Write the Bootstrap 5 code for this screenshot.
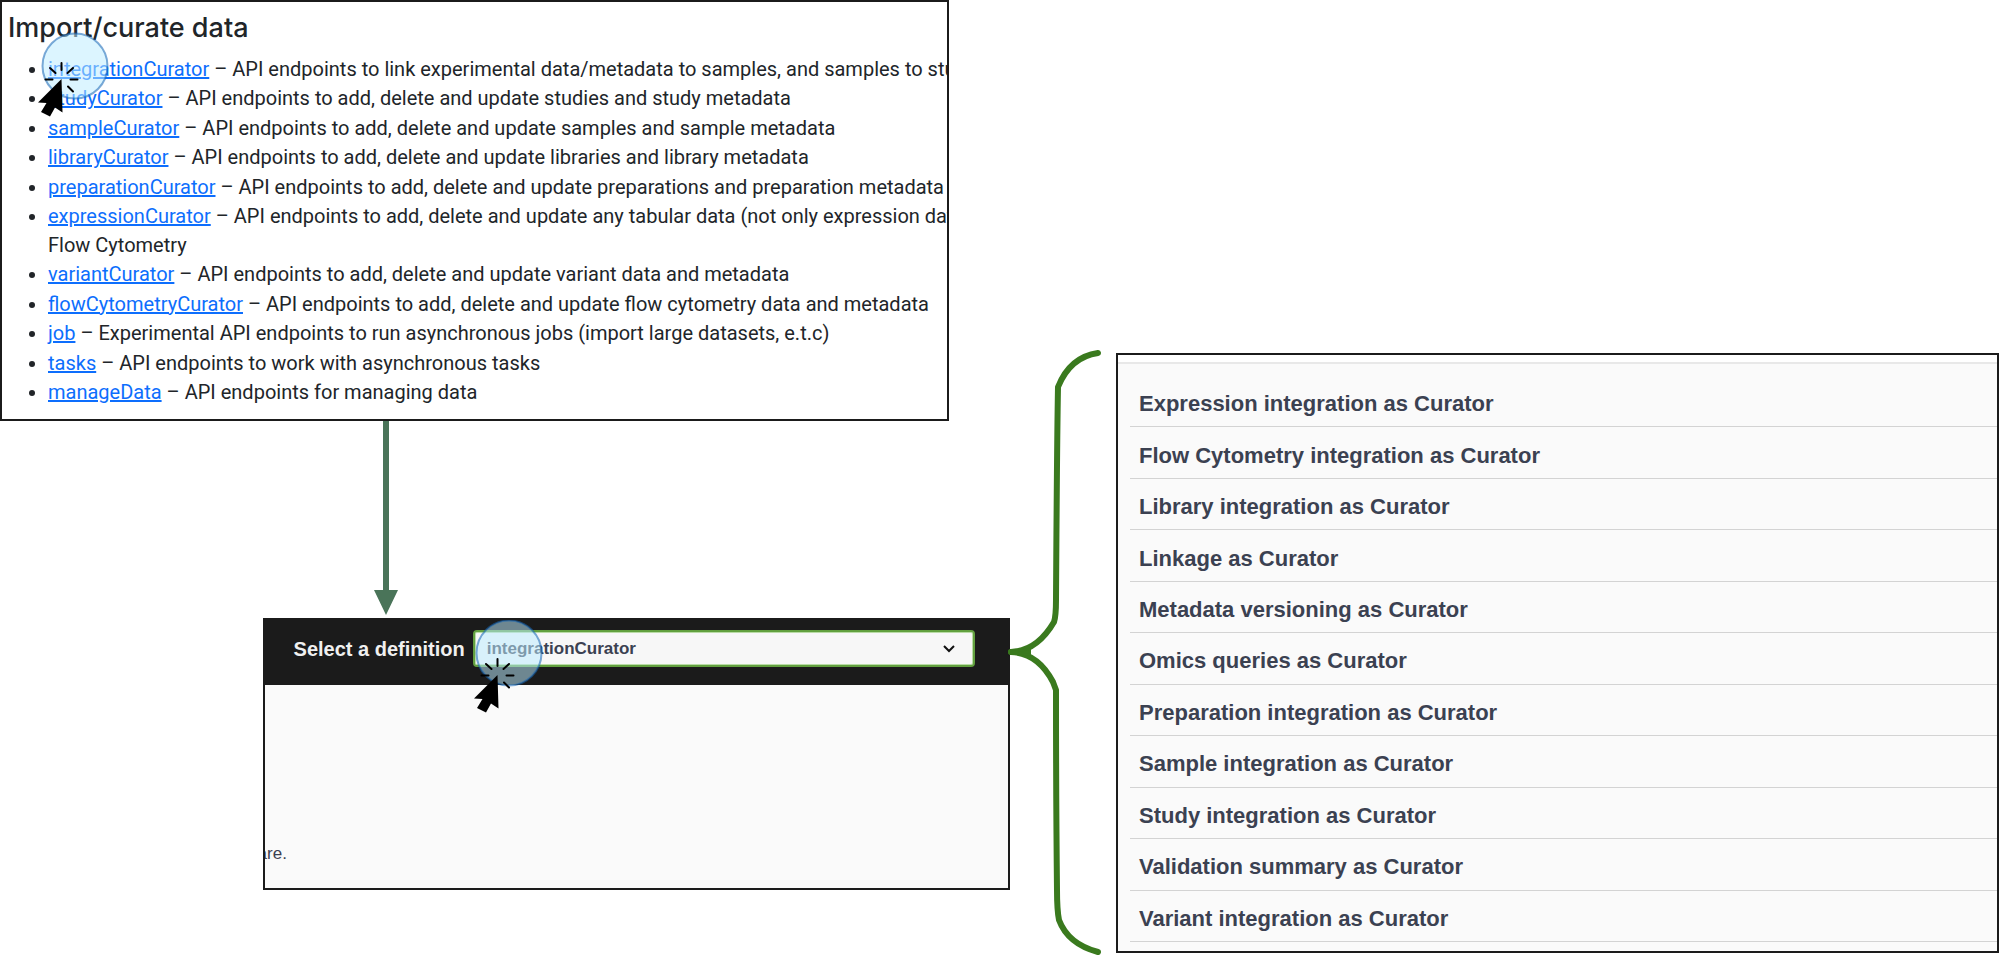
<!DOCTYPE html>
<html lang="en">
<head>
<meta charset="utf-8">
<meta name="viewport" content="width=device-width, initial-scale=1">
<title>Import/curate data</title>
<link href="https://cdn.jsdelivr.net/npm/bootstrap@5.3.0/dist/css/bootstrap.min.css" rel="stylesheet">
<style>
  body { font-family: Inter, "Liberation Sans", sans-serif; color: #212529; }
  .frame { border: 2px solid #1b1b1b; overflow: hidden; }
  .flow-col { flex: 1010 1 0; min-width: 0; }
  .brace-col { flex: 0 0 106px; padding-top: 350px; }
  .ops-col { flex: 883 1 0; min-width: 0; padding-top: 353px; padding-bottom: 2px; }

  .import-panel { width: 94%; padding: 9px 6px 12px; }
  .import-panel h2 { font-size: 27px; line-height: 34px; font-weight: 500; margin-bottom: 10px; }
  .import-list { min-height: 352px; padding-left: 40px; font-family: Roboto, "Liberation Sans", sans-serif; font-size: 20px; line-height: 29px; white-space: nowrap; }
  .import-list a { color: #0d6efd; }

  .down-arrow { margin-left: 374px; height: 197px; }

  .definition-panel { margin-left: 26%; min-height: 272px; background: #fafafa; font-family: "Liberation Sans", sans-serif; color: #3b4151; position: relative; z-index: 1; }
  .definition-bar { background: #1b1b1b; gap: 8px; padding: 10px 33px 18px 29px; }
  .definition-bar label { color: #f0f0f0; font-size: 20px; font-weight: 700; }
  .definition-bar .form-select { --chev: url("data:image/svg+xml,%3csvg xmlns='http://www.w3.org/2000/svg' viewBox='0 0 14 8'%3e%3cpath fill='none' stroke='%23111' stroke-width='2' d='M2 1l5 5 5-5'/%3e%3c/svg%3e");
    background: #f7f7f7 var(--chev) no-repeat right 17px center / 14px 8px; border: 2px solid #62a03f; border-radius: 4px; box-shadow: inset 0 0 0 1px #b9dca6; color: #3b4151;
    font-size: 17px; line-height: 23px; font-weight: 700; padding: 5px 40px 5px 12px; height: 37px; }
  .definition-note { font-size: 17px; line-height: 24px; margin: 157px 0 0 -7px; }

  .ops-panel { background: #fafafa; font-family: "Liberation Sans", sans-serif; }
  .ops-top { height: 9px; background: #fff; border-bottom: 2px solid #e8e8e8; }
  .ops-list { padding: 12px 0 9px 12px; }
  .ops-list li { display: flex; flex: 1 1 0; align-items: center; padding: 6px 9px 0; border-bottom: 1px solid #d3d3d3; color: #3b4151; font-size: 22px; line-height: 28px; font-weight: 700; }

  .halo, .pointer { position: absolute; pointer-events: none; }
  .halo { width: 68px; height: 68px; }
  .pointer { width: 48px; height: 58px; }
  .halo-link { left: 39px; top: 30px; }
  .pointer-link { left: 35px; top: 58px; }
  .halo-select { left: 210px; top: -1px; }
  .pointer-select { left: 208px; top: 36px; }
</style>
</head>
<body>
<svg class="d-none" aria-hidden="true">
  <symbol id="halo" viewBox="0 0 68 68">
    <circle cx="34" cy="34" r="32.500" fill="#bcebff" fill-opacity=".52" stroke="#1464b4" stroke-opacity=".55" stroke-width="2"/>
  </symbol>
  <symbol id="pointer" viewBox="0 0 48 58">
    <path d="M24.500 3v7M13 8l5.500 5M36 8l-5.500 5M8.500 19.500h7M33.500 19.500h7M31 26.500l5 5" stroke="#000" stroke-width="2" stroke-linecap="round"/>
    <path d="M24.500 19L1 42.500l8.500 .5-5.500 9 9 4.500 5-9 7.500 5z"/>
  </symbol>
</svg>
<main class="d-flex min-vh-100">
  <div class="flow-col d-flex flex-column">
    <section class="frame import-panel position-relative bg-white">
      <h2>Import/curate data</h2>
      <ul class="import-list d-flex flex-column justify-content-between mb-0">
        <li><a href="#integration">integrationCurator</a> – API endpoints to link experimental data/metadata to samples, and samples to studies</li>
        <li><a href="#study">studyCurator</a> – API endpoints to add, delete and update studies and study metadata</li>
        <li><a href="#sample">sampleCurator</a> – API endpoints to add, delete and update samples and sample metadata</li>
        <li><a href="#library">libraryCurator</a> – API endpoints to add, delete and update libraries and library metadata</li>
        <li><a href="#preparation">preparationCurator</a> – API endpoints to add, delete and update preparations and preparation metadata</li>
        <li><a href="#expression">expressionCurator</a> – API endpoints to add, delete and update any tabular data (not only expression data)<br>Flow Cytometry</li>
        <li><a href="#variant">variantCurator</a> – API endpoints to add, delete and update variant data and metadata</li>
        <li><a href="#flow">flowCytometryCurator</a> – API endpoints to add, delete and update flow cytometry data and metadata</li>
        <li><a href="#job">job</a> – Experimental API endpoints to run asynchronous jobs (import large datasets, e.t.c)</li>
        <li><a href="#tasks">tasks</a> – API endpoints to work with asynchronous tasks</li>
        <li><a href="#manage">manageData</a> – API endpoints for managing data</li>
      </ul>
      <svg class="halo halo-link" aria-hidden="true"><use href="#halo"/></svg>
      <svg class="pointer pointer-link" aria-hidden="true"><use href="#pointer"/></svg>
    </section>
    <div class="down-arrow" aria-hidden="true">
      <svg class="d-block" width="24" height="195" viewBox="0 0 24 195"><path fill="#4a7459" d="M9 0h6v169h9l-12 25L0 169h9z"/></svg>
    </div>
    <section class="frame definition-panel">
      <div class="definition-bar d-flex align-items-center">
        <label for="definition" class="text-nowrap">Select a definition</label>
        <select id="definition" class="form-select"><option>integrationCurator</option></select>
      </div>
      <p class="definition-note">are.</p>
      <svg class="halo halo-select" aria-hidden="true"><use href="#halo"/></svg>
      <svg class="pointer pointer-select" aria-hidden="true"><use href="#pointer"/></svg>
    </section>
  </div>
  <div class="brace-col position-relative z-2" aria-hidden="true">
    <svg class="d-block overflow-visible" width="106" height="605" viewBox="1010 350 106 605" fill="none" stroke="#3a7a1e" stroke-width="6" stroke-linecap="round" stroke-linejoin="round">
      <path d="M1098 353Q1070 357 1058 387Q1057 440 1056 600Q1056 616 1054 622Q1037 651 1011 652"/>
      <path d="M1011 652Q1038 653 1053 682L1056 690Q1056 800 1057 890Q1057 910 1059 920Q1068 944 1098 952"/>
      <path d="M1012 652L1030 649V655z" fill="#3a7a1e" stroke-width="2"/>
    </svg>
  </div>
  <div class="ops-col d-flex">
    <section class="frame ops-panel d-flex flex-column flex-fill">
      <div class="ops-top"></div>
      <ul class="ops-list list-unstyled d-flex flex-column flex-fill mb-0">
        <li>Expression integration as Curator</li>
        <li>Flow Cytometry integration as Curator</li>
        <li>Library integration as Curator</li>
        <li>Linkage as Curator</li>
        <li>Metadata versioning as Curator</li>
        <li>Omics queries as Curator</li>
        <li>Preparation integration as Curator</li>
        <li>Sample integration as Curator</li>
        <li>Study integration as Curator</li>
        <li>Validation summary as Curator</li>
        <li>Variant integration as Curator</li>
      </ul>
    </section>
  </div>
</main>
<script src="https://cdn.jsdelivr.net/npm/bootstrap@5.3.0/dist/js/bootstrap.bundle.min.js"></script>
</body>
</html>
